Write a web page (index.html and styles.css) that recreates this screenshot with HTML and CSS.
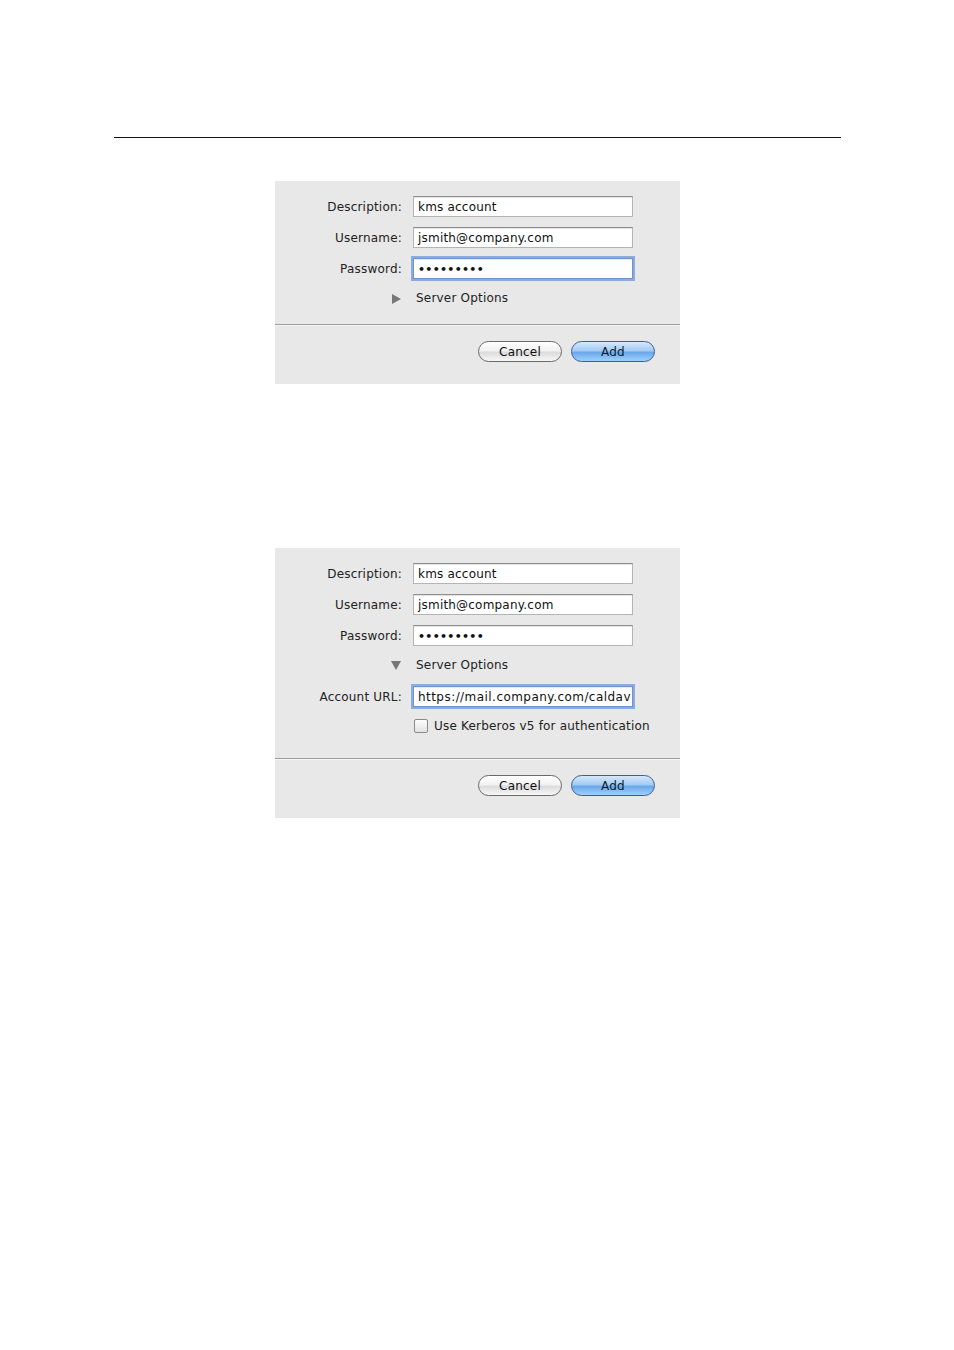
FILE: index.html
```html
<!DOCTYPE html>
<html lang="en">
<head>
  <meta charset="UTF-8">
  <title>Add CalDAV Account</title>
  <link rel="stylesheet" href="styles.css">
</head>
<body>

  <div class="page">
    <hr class="top-rule">

    <div class="sheet sheet-first">
      <div class="form">
        <div class="row">
          <label class="label">Description:</label>
          <div class="field">kms account</div>
        </div>
        <div class="row">
          <label class="label">Username:</label>
          <div class="field">jsmith@company.com</div>
        </div>
        <div class="row">
          <label class="label">Password:</label>
          <div class="field field-focus dots">&bull;&bull;&bull;&bull;&bull;&bull;&bull;&bull;&bull;</div>
        </div>
        <div class="row disclosure-row">
          <span class="label"><span class="tri tri-right"></span></span>
          <span class="disclosure-text">Server Options</span>
        </div>
      </div>
      <div class="footer">
        <button class="btn btn-cancel">Cancel</button>
        <button class="btn btn-add">Add</button>
      </div>
    </div>

    <div class="sheet sheet-second">
      <div class="form">
        <div class="row">
          <label class="label">Description:</label>
          <div class="field">kms account</div>
        </div>
        <div class="row">
          <label class="label">Username:</label>
          <div class="field">jsmith@company.com</div>
        </div>
        <div class="row">
          <label class="label">Password:</label>
          <div class="field dots">&bull;&bull;&bull;&bull;&bull;&bull;&bull;&bull;&bull;</div>
        </div>
        <div class="row disclosure-row">
          <span class="label"><span class="tri tri-down"></span></span>
          <span class="disclosure-text">Server Options</span>
        </div>
        <div class="row url-row">
          <label class="label">Account URL:</label>
          <div class="field field-focus url">https://mail.company.com/caldav</div>
        </div>
        <div class="row check-row">
          <span class="label"></span>
          <span class="checkbox"></span>
          <span class="check-text">Use Kerberos v5 for authentication</span>
        </div>
      </div>
      <div class="footer">
        <button class="btn btn-cancel">Cancel</button>
        <button class="btn btn-add">Add</button>
      </div>
    </div>
  </div>

</body>
</html>
```

FILE: styles.css
```css
body {
  margin: 0;
  background: #fff;
  font-family: 'DejaVu Sans', 'Liberation Sans', sans-serif;
  font-size: 12px;
  letter-spacing: 0.2px;
  color: #1e1e1e;
}

.page {
  width: 954px;
  padding-top: 137px;
}

.top-rule {
  width: 727px;
  margin: 0 0 0 114px;
  border: 0;
  border-top: 1px solid #111;
  height: 0;
}

/* the two dialog sheets */
.sheet {
  width: 405px;
  margin: 0 0 0 275px;
  background: #e8e8e8;
}

.sheet-first {
  margin-top: 43px;
}

.sheet-second {
  margin-top: 164px;
}

.form {
  padding: 15px 0 0 0;
}

.row {
  display: flex;
  align-items: center;
  height: 21px;
  margin-bottom: 10px;
}

.label {
  width: 127px;
  text-align: right;
  flex-shrink: 0;
  margin-right: 11px;
  color: #222;
}

.field {
  width: 210px;
  height: 19px;
  line-height: 21px;
  padding: 0 4px;
  background: #fff;
  border: 1px solid #b4b4b4;
  border-top-color: #8e8e8e;
  box-shadow: inset 0 1px 1px rgba(0, 0, 0, 0.12);
  white-space: nowrap;
  overflow: hidden;
  color: #111;
}

.field-focus {
  border-color: #6f93cf;
  box-shadow: 0 0 0 2px rgba(112, 151, 218, 0.75), inset 0 1px 1px rgba(0, 0, 0, 0.1);
}

.url {
  letter-spacing: 0.45px;
}

.dots {
  font-size: 11px;
  letter-spacing: 0.3px;
  font-weight: bold;
}

.disclosure-row {
  height: 16px;
  margin-top: 11px;
  margin-bottom: 0;
}

.tri {
  display: inline-block;
  width: 0;
  height: 0;
  vertical-align: middle;
}

.tri-right {
  border-top: 5px solid transparent;
  border-bottom: 5px solid transparent;
  border-left: 9px solid #777;
  margin-right: 1px;
}

.tri-down {
  border-left: 5px solid transparent;
  border-right: 5px solid transparent;
  border-top: 9px solid #777;
  margin-right: 1px;
}

.disclosure-text {
  margin-left: 3px;
  color: #222;
}

.url-row {
  margin-top: 13px;
  margin-bottom: 0;
}

.check-row {
  height: 16px;
  margin-top: 11px;
  margin-bottom: 0;
}

.checkbox {
  width: 12px;
  height: 12px;
  border: 1px solid #8a8a8a;
  border-radius: 2px;
  background: linear-gradient(#fdfdfd, #e2e2e2);
  margin-left: 1px;
  margin-right: 6px;
}

.check-text {
  color: #222;
}

.sheet-first .form {
  padding-bottom: 18px;
}

.sheet-second .form {
  padding-bottom: 24px;
}

/* bottom bar with the buttons */
.footer {
  border-top: 1px solid #9c9c9c;
  box-shadow: inset 0 1px 0 #f6f6f6;
  display: flex;
  justify-content: flex-end;
  gap: 9px;
  padding: 16px 25px 22px 0;
}

.btn {
  width: 84px;
  height: 21px;
  border-radius: 11px;
  font-family: 'DejaVu Sans', 'Liberation Sans', sans-serif;
  font-size: 12px;
  letter-spacing: 0.2px;
  padding: 0;
  color: #111;
}

.btn-cancel {
  border: 1px solid #6b6b6b;
  background: linear-gradient(#ffffff 0%, #f2f2f2 45%, #dcdcdc 55%, #f7f7f7 100%);
}

.btn-add {
  border: 1px solid #3a5f9c;
  background: linear-gradient(#d6e8fb 0%, #a4cbf3 45%, #6aa8ec 55%, #9fd0fb 100%);
  color: #0d1a2c;
}
```
